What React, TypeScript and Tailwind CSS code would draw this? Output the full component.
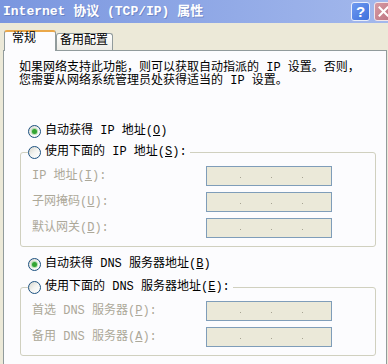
import type { ReactNode } from 'react';

const Radio = ({ checked = false }: { checked?: boolean }) => (
  <span className="flex h-[13px] w-[13px] shrink-0 items-center justify-center rounded-full border border-[#1c5180] bg-gradient-to-br from-[#d6d5cc] via-[#f4f4f1] to-white">
    {checked && (
      <span className="h-[5px] w-[5px] rounded-full bg-[#33a433] shadow-[0_0_0_1px_rgba(130,205,130,.55)]" />
    )}
  </span>
);

const RadioRow = ({ checked, children }: { checked?: boolean; children: ReactNode }) => (
  <div className="flex h-[13px] items-center gap-[4px] leading-[13px] text-black">
    <Radio checked={checked} />
    <span className="whitespace-nowrap">{children}</span>
  </div>
);

// disabled IP address control: three grey dots between the octets
const IpBox = () => (
  <div className="flex h-[20px] w-[126px] items-center border border-[#7f9db9] bg-[#ebe9d9] pl-[3px]">
    {[0, 1, 2].map((i) => (
      <span key={i} className="flex w-[31px] justify-end">
        <span className="mt-[3px] h-px w-px bg-[#a7a493]" />
      </span>
    ))}
  </div>
);

const Field = ({ children }: { children: ReactNode }) => (
  <div className="flex h-[20px] items-center">
    <span className="w-[174px] whitespace-nowrap leading-[13px] text-[#aca899]">{children}</span>
    <IpBox />
  </div>
);

const Group = ({ legend, children }: { legend: ReactNode; children: ReactNode }) => (
  <fieldset className="ml-[16px] w-[356px] rounded-[3px] border border-[#d0d0bf] p-0">
    <legend className="ml-[7px] pr-[3px]">{legend}</legend>
    <div className="flex flex-col gap-[6px] pt-[7px] pb-[8px] pl-[11px]">{children}</div>
  </fieldset>
);

export default function App() {
  return (
    <div className="flex h-[364px] w-[388px] flex-col overflow-hidden bg-[#ece9d8] font-['Liberation_Mono','Noto_Sans_CJK_SC',monospace] text-[12px]">
      {/* title bar */}
      <div className="flex h-[23px] shrink-0 items-center bg-gradient-to-r from-[#7a96df] to-[#a3b8ec] pl-[3px]">
        <span className="whitespace-nowrap text-[13px] font-bold leading-[15px] text-white [text-shadow:1px_1px_0_rgba(60,80,140,.35)]">
          Internet 协议 (TCP/IP) 属性
        </span>
        <div className="-mr-[5px] ml-auto flex items-center gap-[4px]">
          <div className="flex h-[19px] w-[19px] items-center justify-center rounded-[3px] border border-[#e8eefc] bg-gradient-to-br from-[#6f9af0] to-[#3d6fdc] font-['Liberation_Sans',sans-serif] text-[15px] font-bold leading-none text-white">
            ?
          </div>
          <div className="flex h-[19px] w-[19px] items-center justify-center rounded-[3px] border border-[#f3e6ea] bg-gradient-to-br from-[#d69aa4] to-[#bd7380]">
            <svg width="11" height="11" viewBox="0 0 11 11">
              <path d="M1.5 1.5 L9.5 9.5 M9.5 1.5 L1.5 9.5" stroke="#fff" strokeWidth="2" strokeLinecap="square" />
            </svg>
          </div>
        </div>
      </div>

      {/* tabs */}
      <div className="flex h-[27px] shrink-0 items-end pl-[4px]">
        <div className="relative z-10 -mb-px h-[21px] w-[52px] rounded-t-[3px] border-x border-t-2 border-x-[#919b9c] border-t-[#eaa84a] bg-[#fcfcfe] pt-[1px] pl-[7px] leading-[13px] text-black">
          常规
        </div>
        <div className="h-[17px] w-[57px] rounded-t-[3px] border-x border-t border-[#919b9c] bg-gradient-to-b from-white to-[#ecebe5] pt-[1px] pl-[3px] leading-[13px] text-black">
          备用配置
        </div>
      </div>

      {/* page */}
      <div className="ml-[3px] flex w-[384px] flex-1 flex-col border-x border-t border-[#919b9c] bg-[#fcfcfe]">
        <p className="pt-[11px] pl-[15px] leading-[13px] whitespace-nowrap text-black">
          如果网络支持此功能，则可以获取自动指派的 IP 设置。否则，
          <br />
          您需要从网络系统管理员处获得适当的 IP 设置。
        </p>

        <div className="mt-[37px] pl-[24px]">
          <RadioRow checked>
            自动获得 IP 地址(<u>O</u>)
          </RadioRow>
        </div>

        <div className="mt-[8px]">
          <Group
            legend={
              <RadioRow>
                使用下面的 IP 地址(<u>S</u>):
              </RadioRow>
            }
          >
            <Field>
              IP 地址(<u>I</u>):
            </Field>
            <Field>
              子网掩码(<u>U</u>):
            </Field>
            <Field>
              默认网关(<u>D</u>):
            </Field>
          </Group>
        </div>

        <div className="mt-[11px] pl-[24px]">
          <RadioRow checked>
            自动获得 DNS 服务器地址(<u>B</u>)
          </RadioRow>
        </div>

        <div className="mt-[10px]">
          <Group
            legend={
              <RadioRow>
                使用下面的 DNS 服务器地址(<u>E</u>):
              </RadioRow>
            }
          >
            <Field>
              首选 DNS 服务器(<u>P</u>):
            </Field>
            <Field>
              备用 DNS 服务器(<u>A</u>):
            </Field>
          </Group>
        </div>
      </div>
    </div>
  );
}
